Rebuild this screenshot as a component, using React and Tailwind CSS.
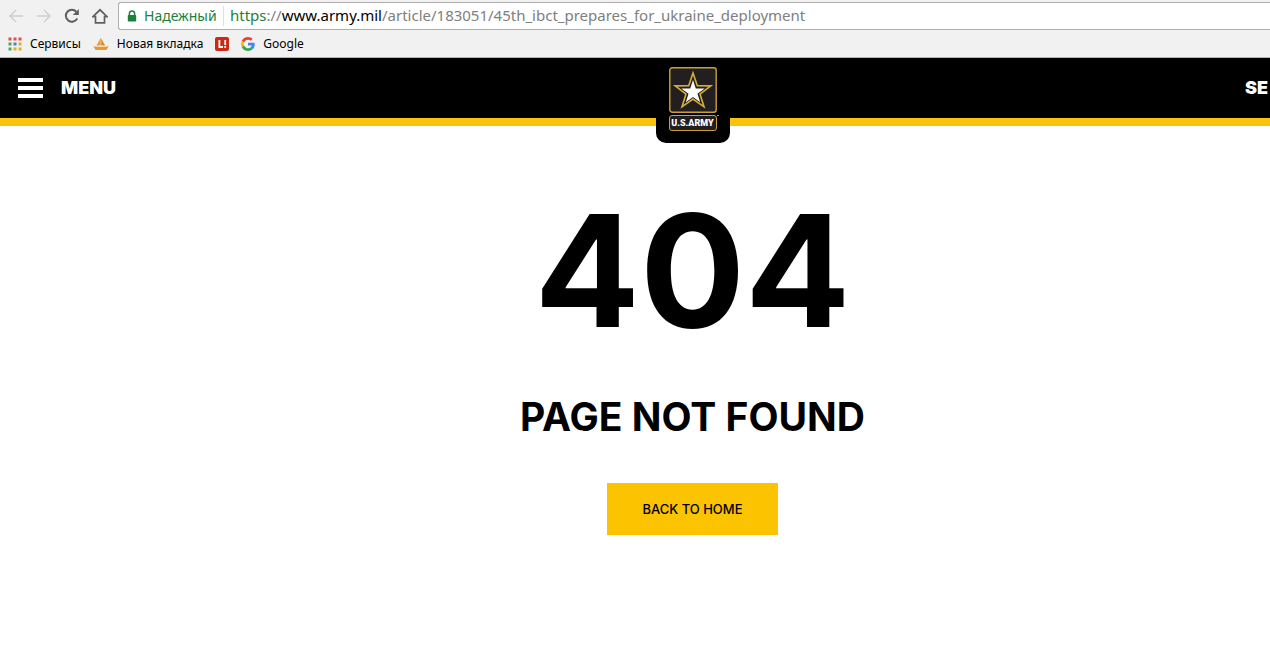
const bookmarks = [
  { label: "Сервисы", icon: <AppsIcon /> },
  { label: "Новая вкладка", icon: <ShipIcon /> },
  { label: "", name: "L!", icon: <SportIcon /> },
  { label: "Google", icon: <GoogleIcon /> },
];

function AppsIcon() {
  const colors = [
    "#d9534a", "#d9534a", "#d9534a",
    "#4fa55b", "#4a80d6", "#e0b02c",
    "#4fa55b", "#e0b02c", "#e0b02c",
  ];
  return (
    <svg className="w-[14px] h-[14px]" viewBox="0 0 14 14">
      {colors.map((color, i) => (
        <rect key={i} x={(i % 3) * 5 + 0.5} y={Math.floor(i / 3) * 5 + 0.5} width="3" height="3" fill={color} />
      ))}
    </svg>
  );
}

function ShipIcon() {
  return (
    <svg className="w-4 h-4" viewBox="0 0 16 16">
      <path d="M7.8 1.5 L7.8 9.4 L3.4 9.4 Z" fill="#e8a33a" />
      <path d="M8.2 2.5 L12.2 9.4 L8.2 9.4 Z" fill="#dd8b22" />
      <path d="M0.3 10.2 C5 11 11 11 15.7 10.2 L13.5 14 L2.6 14 Z" fill="#e39a32" />
    </svg>
  );
}

function SportIcon() {
  return (
    <svg className="w-[14px] h-[14px]" viewBox="0 0 14 14">
      <rect width="14" height="14" rx="2" fill="#cc2a14" />
      <path d="M4.4 3 V10 H8" fill="none" stroke="#fff" strokeWidth="1.8" />
      <path d="M10.2 3 V8" stroke="#fff" strokeWidth="1.8" />
      <rect x="9.3" y="9" width="1.8" height="1.8" fill="#fff" />
    </svg>
  );
}

function GoogleIcon() {
  return (
    <svg className="w-[14px] h-[14px]" viewBox="0 0 48 48">
      <path fill="#EA4335" d="M24 9.5c3.54 0 6.71 1.22 9.21 3.6l6.85-6.85C35.9 2.38 30.47 0 24 0 14.62 0 6.51 5.38 2.56 13.22l7.98 6.19C12.43 13.72 17.74 9.5 24 9.5z" />
      <path fill="#4285F4" d="M46.98 24.55c0-1.57-.15-3.09-.38-4.55H24v9.02h12.94c-.58 2.96-2.26 5.48-4.78 7.18l7.73 6c4.51-4.18 7.09-10.36 7.09-17.65z" />
      <path fill="#FBBC05" d="M10.53 28.59c-.48-1.45-.76-2.99-.76-4.59s.27-3.14.76-4.59l-7.98-6.19C.92 16.46 0 20.12 0 24c0 3.88.92 7.54 2.56 10.78l7.97-6.19z" />
      <path fill="#34A853" d="M24 48c6.48 0 11.93-2.13 15.89-5.81l-7.73-6c-2.15 1.45-4.92 2.3-8.16 2.3-6.26 0-11.57-4.22-13.47-9.91l-7.98 6.19C6.51 42.62 14.62 48 24 48z" />
    </svg>
  );
}

function NavButton({ label, disabled, children }) {
  return (
    <button
      type="button"
      aria-label={label}
      disabled={disabled}
      className={disabled ? "w-4 h-4 text-[#d0d0d0]" : "w-4 h-4 text-[#5f5f5f]"}
    >
      <svg className="w-4 h-4" viewBox="0 0 16 16" fill="none" stroke="currentColor" strokeWidth="2">
        {children}
      </svg>
    </button>
  );
}

function BrowserBar() {
  return (
    <div className="bg-[#f1f1f1] border-b border-[#b4b4b4] font-['Noto_Sans','Open_Sans',sans-serif]">
      <div className="flex items-center pt-[2px] pl-2">
        <div className="flex gap-3 pr-[10px]">
          <NavButton label="Назад" disabled>
            <path d="M15 8 H2 M8 2 L2 8 L8 14" strokeWidth="1.6" />
          </NavButton>
          <NavButton label="Вперёд" disabled>
            <path d="M1 8 H14 M8 2 L14 8 L8 14" strokeWidth="1.6" />
          </NavButton>
          <NavButton label="Обновить">
            <path d="M13.2 10.5 A6 6 0 1 1 12.4 3.8" />
            <path d="M14.8 1 V7 H8.8 Z" fill="currentColor" stroke="none" />
          </NavButton>
          <NavButton label="Домой">
            <path d="M1 8.6 L8 1.8 L15 8.6 H12.5 V14.8 H3.5 V8.6 Z" strokeWidth="1.7" />
          </NavButton>
        </div>
        <div className="flex-1 flex items-center h-7 bg-white border border-r-0 border-[#aeaeae] rounded-l-[3px] pl-2 text-sm whitespace-nowrap">
          <svg className="w-[10px] h-3" viewBox="0 0 10 12">
            <path d="M2.4 6 V3.6 A2.6 2.6 0 0 1 7.6 3.6 V6" fill="none" stroke="#1d7f3c" strokeWidth="1.5" />
            <rect x="0.8" y="5" width="8.4" height="6.5" rx="0.8" fill="#1d7f3c" />
          </svg>
          <span className="ml-[7px] w-[73px] text-[#1d7f3c]">Надежный</span>
          <span className="mx-[6px] w-px h-5 bg-[#dedede]"></span>
          <div role="textbox" aria-label="Адресная строка" className="text-[15px] text-[#808080]">
            <span className="text-[#1d7f3c]">https</span>://<span className="text-black">www.army.mil</span>
            /article/183051/45th_ibct_prepares_for_ukraine_deployment
          </div>
        </div>
      </div>

      <nav className="flex items-center h-[27px] pl-2 gap-3 text-xs text-black">
        {bookmarks.map((item) => (
          <a key={item.label} href="#" aria-label={item.name} className="flex items-center gap-2">
            {item.icon}
            {item.label && <span>{item.label}</span>}
          </a>
        ))}
      </nav>
    </div>
  );
}

function ArmyLogo() {
  return (
    <a
      href="#"
      aria-label="U.S. Army"
      className="absolute top-0 left-1/2 -translate-x-1/2 w-[74px] h-[85px] bg-black rounded-b-[10px] flex flex-col items-center pt-[9px]"
    >
      <svg className="w-12 h-[46px]" viewBox="0 0 48 46">
        <rect x="0.8" y="0.8" width="46.4" height="44.4" rx="2.5" fill="#231f20" stroke="#c9a233" strokeWidth="1.4" />
        <path d="M24 6 L28.3 18.8 L41.8 18.9 L31 27 L35 39.8 L24 32 L13 39.8 L17 27 L6.2 18.9 L19.7 18.8 Z" fill="#231f20" stroke="#d8ae35" strokeWidth="1.6" />
        <path d="M24 13 L26.8 21.4 L35.6 21.5 L28.5 26.8 L31.2 35.2 L24 30.1 L16.8 35.2 L19.5 26.8 L12.4 21.5 L21.2 21.4 Z" fill="#fff" />
      </svg>
      <span className="mt-[2px] w-12 h-4 flex items-center justify-center rounded-[3px] border border-[#c9a233] bg-[#231f20] text-white text-[9px] font-black leading-none font-['Roboto',sans-serif]">
        U.S.ARMY
      </span>
      <span className="absolute right-[11px] top-[57px] w-[2px] h-px bg-[#c9a233]"></span>
    </a>
  );
}

function SiteHeader() {
  return (
    <header className="relative flex items-center justify-between h-[68px] px-[18px] bg-black border-b-8 border-[#fcc30b] text-white text-lg font-black">
      <button type="button" className="flex items-center gap-[18px]">
        <span className="flex flex-col gap-1">
          <span className="w-[25px] h-1 bg-white"></span>
          <span className="w-[25px] h-1 bg-white"></span>
          <span className="w-[25px] h-1 bg-white"></span>
        </span>
        <span>MENU</span>
      </button>
      <ArmyLogo />
      <button type="button" aria-label="Search" className="w-[122px] text-left">SE</button>
    </header>
  );
}

export default function App() {
  return (
    <div className="min-h-screen bg-white overflow-hidden">
      <BrowserBar />
      {/* the site is wider than the window and runs off its right edge */}
      <div className="min-w-[1385px] font-['Inter',sans-serif]">
        <SiteHeader />
        <main className="flex flex-col items-center pt-[65px] text-black">
          <h1 className="text-[156px] leading-[160px] font-bold">404</h1>
          <h2 className="mt-[42px] text-[39px] leading-[48px] font-bold">PAGE NOT FOUND</h2>
          <a href="#" className="mt-[42px] px-[35px] pt-[2px] h-[52px] flex items-center bg-[#fcc300] text-[13px] font-medium">
            BACK TO HOME
          </a>
        </main>
      </div>
    </div>
  );
}
